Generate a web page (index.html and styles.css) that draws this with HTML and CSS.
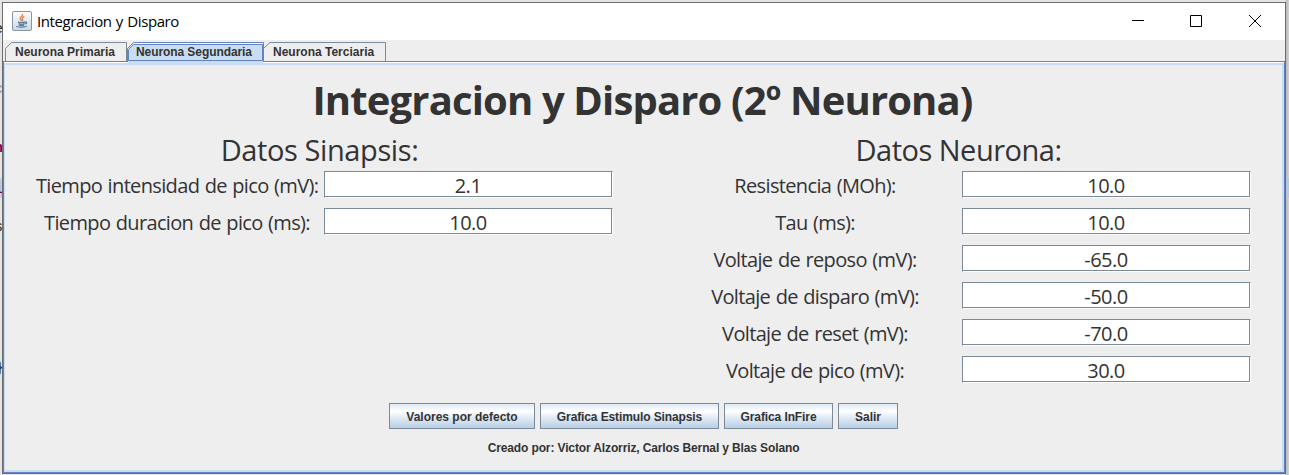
FILE: index.html
```html
<!DOCTYPE html>
<html lang="es">
<head>
<meta charset="utf-8">
<title>Integracion y Disparo</title>
<link rel="stylesheet" href="styles.css">
</head>
<body>
<div class="behind"><i class="line"></i><span class="frag f1">e</span><span class="frag f2">c</span><span class="frag f3">n</span><span class="frag f4">i</span><span class="frag f5">s</span><span class="frag f6">}</span><i class="strip"></i></div>
<main class="window">
  <header class="titlebar">
    <svg class="java" width="20" height="20" viewBox="0 0 20 20">
      <defs><linearGradient id="g" x1="0" y1="0" x2="0" y2="1"><stop offset="0" stop-color="#fdfdfd"/><stop offset="1" stop-color="#ced8e2"/></linearGradient></defs>
      <rect x=".5" y=".5" width="19" height="19" rx="1.5" fill="url(#g)" stroke="#8496a8"/>
      <path d="M10.500 3c1 2-3 3-2.300 4.700.3.900 1.300 1.200 1.500 2.300M12.300 5.500c-2 .8-2.600 1.800-1.700 3 .4.600.2 1.200-.3 1.600" fill="none" stroke="#e0874a" stroke-width="1.400"/>
      <path d="M6 10.900c1.500.8 5.500.8 7 0M6.500 12.600c1.700.7 4.300.7 6 0M13 10.900c2.500-.5 2.200 1.600-.3 2.100M7 14.100c1.500.5 3.500.5 5 0M4.700 15c-.5 1.300 8.500 1.500 10 .1" fill="none" stroke="#56799c" stroke-width="1.200"/>
    </svg>
    <span class="caption">Integracion y Disparo</span>
    <svg class="controls" width="130" height="14" viewBox="0 0 130 14" fill="none" stroke="#000">
      <path d="M0 5.500h12M58.500 .5h11v11h-11zM117 0l12 12M129 0l-12 12"/>
    </svg>
  </header>
  <nav class="tabs">
    <div class="tab t1"><svg viewBox="0 0 122 19" width="122" height="19"><path d="M.5 19V6.500L6.500.5H121.500V19" fill="#eee" stroke="#7a8a99"/></svg><span>Neurona Primaria</span></div>
    <div class="tab t2"><svg viewBox="0 0 137 23" width="137" height="23"><path d="M1 18H136V23H1z" fill="#c8ddf2"/><path d="M.5 20V6.500L6.500.5H136.500V20" fill="#c8ddf2" stroke="#6382bf"/><path d="M1.500 18V7L7 1.500H135.500" fill="none" stroke="#fff"/><path d="M1.500 18.500V7.500L6.500 2.500H135.500V18.500Z" fill="#c8ddf2" stroke="#6382bf"/></svg><span>Neurona Segundaria</span></div>
    <div class="tab t3"><svg viewBox="0 0 122 19" width="122" height="19"><path d="M0 6L6 .5H121.500V19" fill="none" stroke="#7a8a99"/></svg><span>Neurona Terciaria</span></div>
  </nav>
  <section class="panel">
    <h1>Integracion y Disparo (2º Neurona)</h1>
    <div class="columns">
      <div class="group synapse">
        <h2>Datos Sinapsis:</h2>
        <label><span class="name">Tiempo intensidad de pico (mV):</span><span class="field">2.1</span></label>
        <label><span class="name">Tiempo duracion de pico (ms):</span><span class="field">10.0</span></label>
      </div>
      <div class="group neuron">
        <h2>Datos Neurona:</h2>
        <label><span class="name">Resistencia (MOh):</span><span class="field">10.0</span></label>
        <label><span class="name">Tau (ms):</span><span class="field">10.0</span></label>
        <label><span class="name">Voltaje de reposo (mV):</span><span class="field">-65.0</span></label>
        <label><span class="name">Voltaje de disparo (mV):</span><span class="field">-50.0</span></label>
        <label><span class="name">Voltaje de reset (mV):</span><span class="field">-70.0</span></label>
        <label><span class="name">Voltaje de pico (mV):</span><span class="field">30.0</span></label>
      </div>
    </div>
    <div class="buttons">
      <button class="b1">Valores por defecto</button><button class="b2">Grafica Estimulo Sinapsis</button><button class="b3">Grafica InFire</button><button class="b4">Salir</button>
    </div>
    <footer>Creado por: Victor Alzorriz, Carlos Bernal y Blas Solano</footer>
  </section>
</main>
</body>
</html>
```
FILE: styles.css
```css
* { box-sizing: border-box; }
body { margin: 0; width: 1289px; height: 475px; overflow: hidden; padding: 2px; background: #e2e2e2; color: #333; font-family: "Open Sans", "Noto Sans", sans-serif; }
.behind { position: absolute; left: 0; top: 0; width: 1289px; height: 475px; background: linear-gradient(90deg, #e4e4e4 0 1286px, #b8b8b8 1286px, #d4d4d4 1289px); overflow: hidden; }
.frag { position: absolute; right: 1286px; font: 14px/16px "Liberation Mono", monospace; color: #222; }
.f1 { top: 21px; } .f2 { top: 81px; color: #7a8ba8; }
.f3 { top: 140px; color: #7f0055; font-weight: bold; }
.f4 { top: 181px; color: #7f0055; font-weight: bold; }
.f5 { top: 219px; } .f6 { top: 360px; right: 1285px; }
.line { position: absolute; left: 0; top: 178px; width: 3px; height: 20px; background: #c6d0dc; }
.strip { position: absolute; right: 0; top: 178px; width: 3px; height: 20px; background: #b8c8dc; }
.window { position: relative; width: 1284px; height: 472px; border: 1px solid #6d6d6d; background: #eee; display: flex; flex-direction: column; }
.titlebar { height: 37px; background: #fff; display: flex; align-items: center; padding: 0 23px 1px 9px; flex: none; }
.caption { font-size: 15px; line-height: 20px; color: #000; margin-left: 5px; letter-spacing: -.4px; word-spacing: .8px; flex: 1; }
.controls { margin-top: 1px; }
.tabs { height: 21px; padding: 2px 0 0 2px; display: flex; flex: none; font: bold 12px/15px "Liberation Sans", Arial, sans-serif; }
.tab { position: relative; height: 19px; padding: 3px 0 0 10px; white-space: nowrap; }
.tab svg { position: absolute; left: 0; top: 0; }
.tab span { position: relative; }
.t1 { width: 122px; } .t2 { width: 137px; z-index: 1; } .t3 { width: 122px; }
.t2 { padding-left: 9px; letter-spacing: -.08px; }
.t3 { padding-left: 9px; }
.panel { flex: 1; border: 1px solid #6382bf; box-shadow: inset 0 1px #fff, inset 0 3px #c8ddf2, inset 1px 0 #c8ddf2, inset -2px 0 #c8ddf2, inset 0 -2px #c8ddf2; padding: 13px 0 0; }
h1, h2 { margin: 0; text-align: center; }
h1 { font-size: 40px; line-height: 50px; height: 50px; letter-spacing: -.85px; padding-right: 3px; }
h2 { font-weight: 400; font-size: 29px; line-height: 40px; height: 41px; letter-spacing: -.4px; }
.synapse h2 { padding-right: 9px; }
.neuron h2 { padding-right: 11px; letter-spacing: -.5px; }
.columns { display: flex; padding-top: 5px; height: 278px; }
.group { width: 640px; }
.group label { display: grid; height: 27px; margin-bottom: 10px; }
.synapse label { grid-template-columns: 288px 289px; padding-left: 32px; }
.neuron label { grid-template-columns: 293px 289px; padding-left: 25px; }
.name, .field { font-size: 20px; line-height: 29px; text-align: center; white-space: nowrap; letter-spacing: -.65px; word-spacing: .9px; }
.synapse .name { padding-right: 6px; }
.neuron .name { padding-right: 1px; }
.field { height: 27px; line-height: 27px; letter-spacing: -.5px; background: #fff; border: 1px solid #7a8a99; border-bottom-color: #fff; border-right-color: #fff; box-shadow: inset -1px -1px #7a8a99; padding-right: 1px; }
.buttons { display: flex; gap: 5px; padding-left: 385px; height: 26px; }
button { height: 26px; padding: 2px 0 0; border: 1px solid #7a8a99; border-radius: 0; background: linear-gradient(#dde8f3 0, #fff 30%, #dde8f3 60%, #b8cfe5); color: #333; font: bold 12px "Liberation Sans", Arial, sans-serif; }
.b1 { width: 146px; } .b2 { width: 179px; letter-spacing: -.11px; } .b3 { width: 109px; letter-spacing: -.1px; } .b4 { width: 60px; }
footer { text-align: center; font: bold 12px/15px "Liberation Sans", Arial, sans-serif; margin-top: 12px; letter-spacing: -.125px; padding-right: 1px; }
```
